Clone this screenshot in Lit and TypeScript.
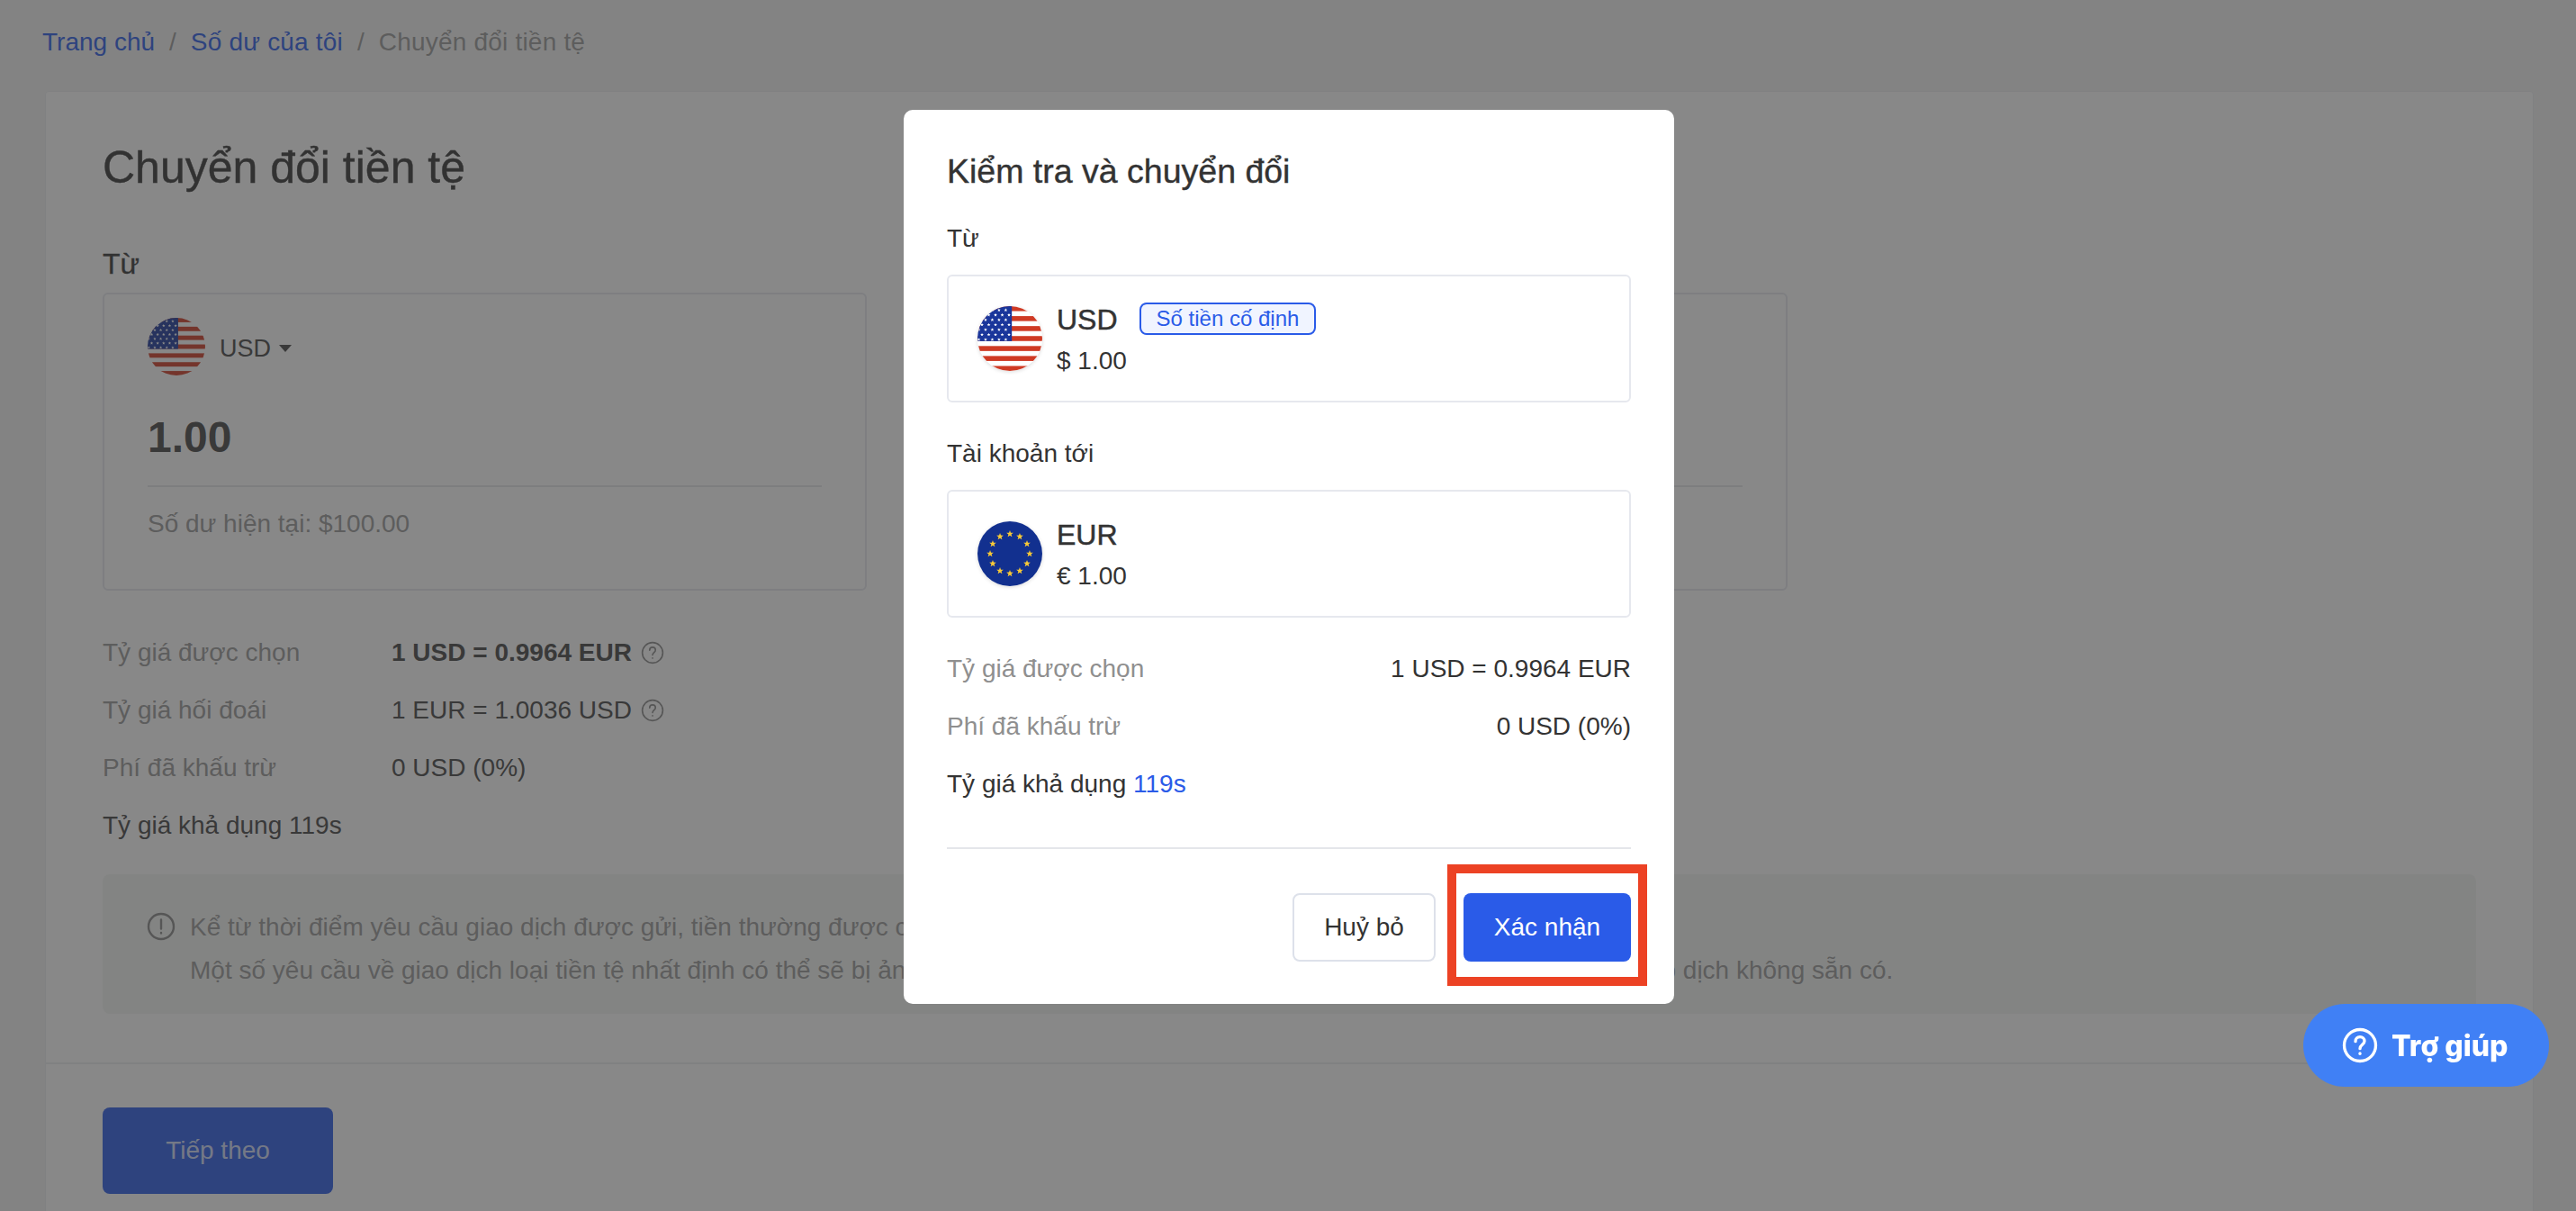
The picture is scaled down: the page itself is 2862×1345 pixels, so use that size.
import { LitElement, html, css, svg } from "lit";
import { customElement } from "lit/decorators.js";

// five pointed star as a points string
function star(cx: number, cy: number, r: number) {
  const pts: string[] = [];
  for (let i = 0; i < 10; i++) {
    const rad = i % 2 ? r * 0.42 : r;
    const a = (Math.PI / 5) * i - Math.PI / 2;
    pts.push(`${(cx + rad * Math.cos(a)).toFixed(2)},${(cy + rad * Math.sin(a)).toFixed(2)}`);
  }
  return pts.join(" ");
}

function usFlag() {
  const stripes = [];
  for (let i = 0; i < 13; i += 2) {
    stripes.push(svg`<rect x="0" y=${(i * 100) / 13} width="100" height=${100 / 13} fill="#cf3a24"></rect>`);
  }
  const stars = [];
  for (let row = 0; row < 7; row++) {
    const offset = row % 2 ? 7 : 2;
    for (let col = 0; col < 5; col++) {
      stars.push(svg`<polygon points=${star(offset + col * 10.4, 6 + row * 7.6, 2.8)} fill="#fff"></polygon>`);
    }
  }
  return html`<svg class="flag" viewBox="0 0 100 100">
    <rect width="100" height="100" fill="#fff"></rect>
    ${stripes}
    <rect width="53" height="54" fill="#1a369b"></rect>
    ${stars}
  </svg>`;
}

function euFlag() {
  const stars = [];
  for (let i = 0; i < 12; i++) {
    const a = (Math.PI / 6) * i;
    stars.push(svg`<polygon points=${star(50 + 30.5 * Math.sin(a), 50 - 30.5 * Math.cos(a), 5.6)} fill="#f7c937"></polygon>`);
  }
  return html`<svg class="flag" viewBox="0 0 100 100">
    <rect width="100" height="100" fill="#12308f"></rect>
    ${stars}
  </svg>`;
}

const helpIcon = (cls: string) => html`<svg class=${cls} viewBox="0 0 24 24" fill="none" stroke="currentColor" stroke-width="1.5" stroke-linecap="round">
  <circle cx="12" cy="12" r="10.5"></circle>
  <path d="M9 9.4c0-1.8 1.3-3 3-3s3 1.1 3 2.8c0 2.4-3 2.4-3 5"></path>
  <path d="M12 17.4v.2"></path>
</svg>`;

@customElement("app-root")
export class AppRoot extends LitElement {
  static styles = css`
    :host {
      display: block;
      height: 100vh;
      overflow: hidden;
      font-family: "Liberation Sans", Arial, sans-serif;
      font-size: 28px;
      color: #444;
      background: #f4f4f4;
    }
    .page {
      padding: 0 47px 0 50px;
    }
    .crumbs {
      display: flex;
      gap: 16px;
      height: 101px;
      padding-top: 27px;
      margin-left: -3px;
      box-sizing: border-box;
      line-height: 40px;
      color: #999;
    }
    .crumbs a {
      color: #2a5be8;
    }
    .crumbs a + span + a,
    .crumbs .here {
      letter-spacing: 0.2px;
    }
    .card {
      background: #fff;
      border: 1px solid #eceef1;
      border-radius: 4px;
    }
    .body {
      padding: 54px 63px 54px;
    }
    h1 {
      margin: 0;
      font-size: 50px;
      font-weight: 400;
      line-height: 60px;
      color: #333;
      -webkit-text-stroke: 0.4px #333;
    }
    .from-label {
      margin-top: 57px;
      font-size: 32px;
      line-height: 40px;
      color: #333;
      -webkit-text-stroke: 0.3px #333;
    }
    .boxes {
      display: grid;
      grid-template-columns: 849px 849px;
      gap: 174px;
      margin-top: 12px;
    }
    .box {
      height: 331px;
      box-sizing: border-box;
      border: 2px solid #e6e8ee;
      border-radius: 6px;
      padding: 28px 48px 0;
    }
    .picker {
      display: flex;
      align-items: center;
      gap: 16px;
      height: 64px;
    }
    .picker .flag {
      width: 64px;
      height: 64px;
      margin-top: -4px;
    }
    .picker span {
      font-size: 27px;
    }
    .caret {
      width: 0;
      height: 0;
      margin-left: -7px;
      border: 7px solid transparent;
      border-top: 8px solid #444;
      border-bottom: 0;
    }
    .amount {
      height: 56px;
      margin-top: 39px;
      padding-bottom: 25px;
      border-bottom: 2px solid #e4e6ea;
      font-size: 48px;
      font-weight: 700;
      line-height: 56px;
    }
    .balance {
      margin-top: 23px;
      line-height: 36px;
      color: #999;
    }
    .info-rows {
      margin-top: 37px;
    }
    .info-row {
      display: flex;
      align-items: center;
      height: 64px;
    }
    .info-row .name {
      width: 321px;
      color: #999;
    }
    .info-row.bold .val {
      font-weight: 700;
    }
    .val {
      display: flex;
      align-items: center;
      gap: 10px;
    }
    .q {
      width: 26px;
      height: 26px;
      color: #888;
    }
    .notice {
      display: grid;
      grid-template-columns: 32px 1fr;
      column-gap: 16px;
      height: 155px;
      box-sizing: border-box;
      margin-top: 22px;
      padding: 35px 49px 0;
      border-radius: 8px;
      background: #f4f6f4;
      color: #999;
      line-height: 48px;
    }
    .notice svg {
      width: 32px;
      height: 32px;
      margin-top: 7px;
    }
    .foot {
      border-top: 2px solid #eceef1;
      padding: 48px 63px;
    }
    .next {
      width: 256px;
      height: 96px;
      border: 0;
      border-radius: 8px;
      background: #2a5be8;
      color: rgba(255, 255, 255, 0.8);
      font: inherit;
    }

    .overlay {
      position: fixed;
      inset: 0;
      display: flex;
      justify-content: center;
      align-items: flex-start;
      padding: 122px 0 0 2px;
      background: rgba(50, 50, 50, 0.58);
    }
    .modal {
      position: relative;
      width: 856px;
      height: 993px;
      box-sizing: border-box;
      padding: 44px 48px 0;
      background: #fff;
      border-radius: 10px;
      color: #333;
    }
    h2 {
      margin: 0;
      font-size: 37.5px;
      font-weight: 400;
      line-height: 48px;
      -webkit-text-stroke: 0.4px #333;
    }
    .m-label {
      line-height: 40px;
    }
    .m-label.first {
      margin-top: 31px;
    }
    .m-label.second {
      margin-top: 37px;
    }
    .m-box {
      display: flex;
      align-items: center;
      gap: 16px;
      height: 142px;
      box-sizing: border-box;
      margin-top: 20px;
      padding: 0 32px;
      border: 2px solid #e6e8ee;
      border-radius: 6px;
    }
    .m-box .flag {
      width: 72px;
      height: 72px;
      box-shadow: 0 1px 4px rgba(0, 0, 0, 0.15);
    }
    .m-text {
      padding-top: 2px;
    }
    .m-cur {
      display: flex;
      align-items: center;
      gap: 24px;
      font-size: 32px;
      line-height: 40px;
      -webkit-text-stroke: 0.5px #333;
    }
    .m-sum {
      margin-top: 8px;
      line-height: 36px;
    }
    .badge {
      padding: 0 17px;
      height: 36px;
      margin-top: -3px;
      box-sizing: border-box;
      border: 2px solid #2a5be8;
      border-radius: 8px;
      background: #f0f4ff;
      color: #2a5be8;
      font-size: 24px;
      line-height: 32px;
      -webkit-text-stroke: 0;
    }
    .m-rows {
      margin-top: 25px;
    }
    .m-row {
      display: flex;
      justify-content: space-between;
      align-items: center;
      height: 64px;
    }
    .m-row .name {
      color: #8f8f8f;
    }
    .m-timer {
      line-height: 64px;
    }
    .m-timer span {
      color: #2a5be8;
    }
    .m-actions {
      display: flex;
      justify-content: flex-end;
      gap: 31px;
      margin-top: 38px;
      padding-top: 49px;
      border-top: 2px solid #e4e6ea;
    }
    .m-actions button {
      height: 76px;
      border-radius: 8px;
      font: inherit;
    }
    .cancel {
      width: 159px;
      border: 2px solid #dde1ea;
      background: #fff;
      color: #333;
    }
    .confirm {
      width: 186px;
      border: 0;
      background: #2a5be8;
      color: #fff;
    }
    .mark {
      position: absolute;
      left: 604px;
      top: 838px;
      width: 222px;
      height: 135px;
      box-sizing: border-box;
      border: 10px solid #ec4224;
    }
    .help {
      position: fixed;
      right: 30px;
      top: 1115px;
      display: flex;
      align-items: center;
      gap: 15px;
      width: 273px;
      height: 92px;
      box-sizing: border-box;
      padding-left: 43px;
      border-radius: 46px;
      background: #4080f5;
      color: #fff;
      font-family: Inter, "Noto Sans", sans-serif;
      font-size: 32px;
      font-weight: 800;
    }
    .help svg {
      width: 40px;
      height: 40px;
      stroke-width: 2;
    }
    .flag {
      display: block;
      flex: none;
      border-radius: 50%;
    }
  `;

  render() {
    return html`
      <div class="page">
        <nav class="crumbs">
          <a>Trang chủ</a><span>/</span><a>Số dư của tôi</a><span>/</span><span class="here">Chuyển đổi tiền tệ</span>
        </nav>
        <div class="card">
          <div class="body">
            <h1>Chuyển đổi tiền tệ</h1>
            <div class="from-label">Từ</div>
            <div class="boxes">
              <div class="box">
                <div class="picker">${usFlag()}<span>USD</span><i class="caret"></i></div>
                <div class="amount">1.00</div>
                <div class="balance">Số dư hiện tại: $100.00</div>
              </div>
              <!-- this box sits behind the dialog, only its frame and line show -->
              <div class="box">
                <div class="picker"></div>
                <div class="amount"></div>
              </div>
            </div>
            <div class="info-rows">
              <div class="info-row bold">
                <span class="name">Tỷ giá được chọn</span>
                <span class="val">1 USD = 0.9964 EUR ${helpIcon("q")}</span>
              </div>
              <div class="info-row">
                <span class="name">Tỷ giá hối đoái</span>
                <span class="val">1 EUR = 1.0036 USD ${helpIcon("q")}</span>
              </div>
              <div class="info-row">
                <span class="name">Phí đã khấu trừ</span>
                <span class="val">0 USD (0%)</span>
              </div>
              <div class="info-row"><span>Tỷ giá khả dụng 119s</span></div>
            </div>
            <div class="notice">
              <svg viewBox="0 0 32 32" fill="none" stroke="#888" stroke-width="2.4" stroke-linecap="round">
                <circle cx="16" cy="16" r="14"></circle>
                <path d="M16 8.5v10M16 23v.4"></path>
              </svg>
              <div>
                Kể từ thời điểm yêu cầu giao dịch được gửi, tiền thường được chuyển đổi ngay lập tức.<br />
                Một số yêu cầu về giao dịch loại tiền tệ nhất định có thể sẽ bị ảnh hưởng bởi ngày nghỉ lễ ngân hàng quốc tế, cuối tuần hoặc khi giao dịch không sẵn có.
              </div>
            </div>
          </div>
          <div class="foot"><button class="next">Tiếp theo</button></div>
        </div>
      </div>

      <div class="overlay">
        <div class="modal">
          <h2>Kiểm tra và chuyển đổi</h2>
          <div class="m-label first">Từ</div>
          <div class="m-box">
            ${usFlag()}
            <div class="m-text">
              <div class="m-cur">USD <span class="badge">Số tiền cố định</span></div>
              <div class="m-sum">$ 1.00</div>
            </div>
          </div>
          <div class="m-label second">Tài khoản tới</div>
          <div class="m-box">
            ${euFlag()}
            <div class="m-text">
              <div class="m-cur">EUR</div>
              <div class="m-sum">€ 1.00</div>
            </div>
          </div>
          <div class="m-rows">
            <div class="m-row"><span class="name">Tỷ giá được chọn</span><span>1 USD = 0.9964 EUR</span></div>
            <div class="m-row"><span class="name">Phí đã khấu trừ</span><span>0 USD (0%)</span></div>
          </div>
          <div class="m-timer">Tỷ giá khả dụng <span>119s</span></div>
          <div class="m-actions">
            <button class="cancel">Huỷ bỏ</button>
            <button class="confirm">Xác nhận</button>
          </div>
          <div class="mark"></div>
        </div>
      </div>

      <div class="help">${helpIcon("")}<span>Trợ giúp</span></div>
    `;
  }
}
